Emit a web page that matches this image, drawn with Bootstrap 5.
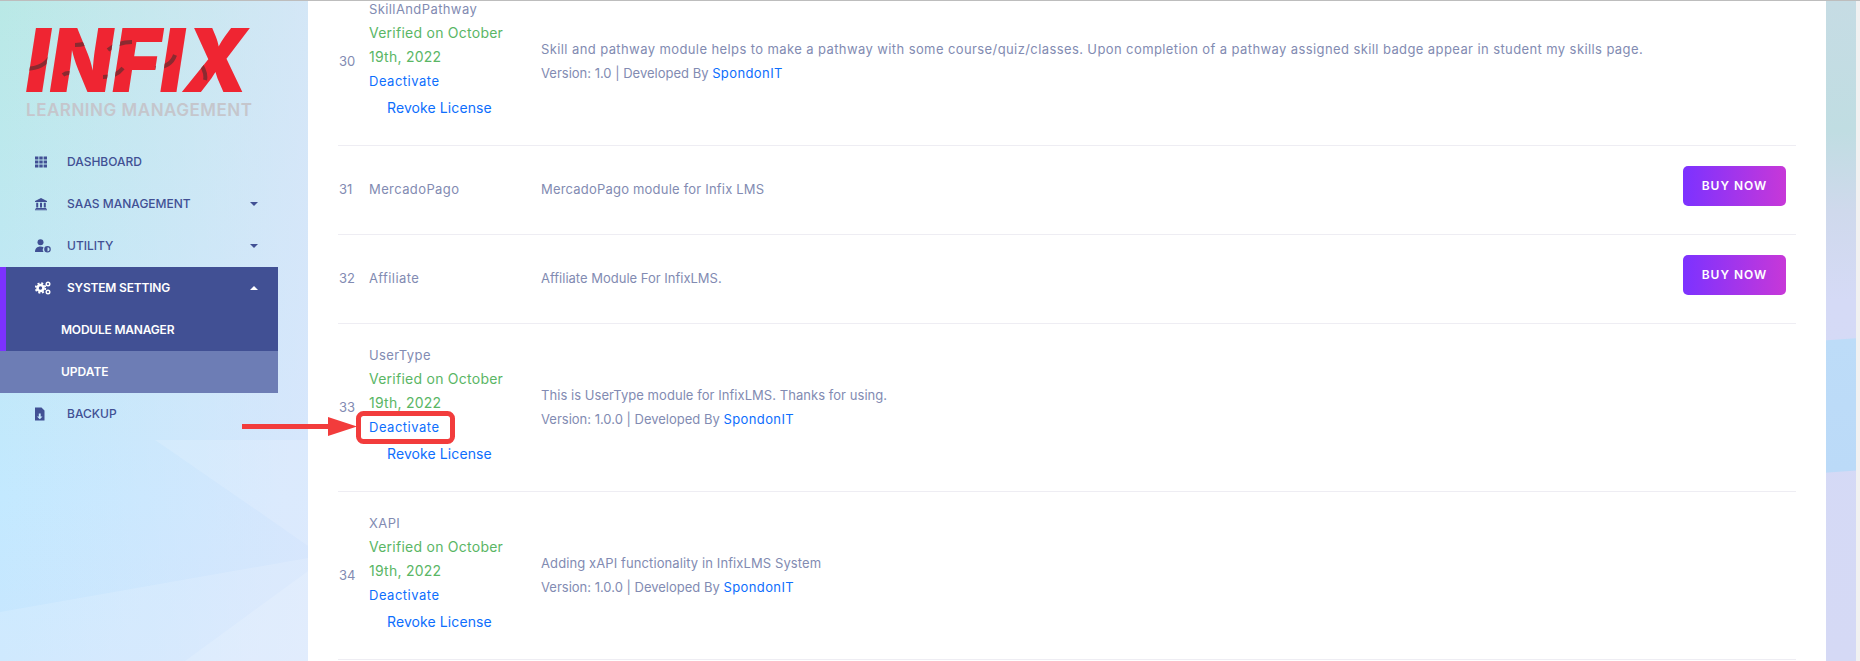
<!DOCTYPE html>
<html lang="en">
<head>
  <meta charset="UTF-8" />
  <meta name="viewport" content="width=device-width, initial-scale=1" />
  <title>Module Manager - Infix LMS</title>
  <link href="https://cdn.jsdelivr.net/npm/bootstrap@5.3.2/dist/css/bootstrap.min.css" rel="stylesheet" />
  <script src="https://cdn.jsdelivr.net/npm/bootstrap@5.3.2/dist/js/bootstrap.bundle.min.js"></script>
  <style>
    html, body { height: 100%; overflow: hidden; }
    body {
      font-family: Inter, "Liberation Sans", sans-serif;
      font-size: 13px;
      color: #828bb2;
      border-top: 1px solid #bdbdbd;
      background: #f1f1f1;
    }
    .page-wrap { height: 660px; width: 1856px; position: relative; overflow: hidden; }
    .side-menu {
      width: 308px;
      flex: none;
      background-image: url("data:image/svg+xml,%3Csvg xmlns='http://www.w3.org/2000/svg' width='308' height='660'%3E%3Cpolygon points='155,439 268,517 308,545 308,439' fill='%23fff' fill-opacity='.14'/%3E%3Cpolygon points='0,611 268,564 308,557 308,660 0,660' fill='%23fff' fill-opacity='.14'/%3E%3Cpolygon points='185,660 308,570 308,660' fill='%23fff' fill-opacity='.14'/%3E%3C/svg%3E"),
        linear-gradient(90deg, rgba(221,230,252,0) 0, rgba(221,230,252,.75) 100%),
        linear-gradient(180deg, #b9e9e6 0, #bfe8f3 40%, #c3e9ff 75%, #c8e6fe 100%);
    }
    .logo-box { height: 140px; padding-left: 26px; }
    .logo-box svg { display: block; overflow: visible; }
    .menu-item {
      height: 42px;
      padding-left: 35px;
      padding-right: 20px;
      width: 278px;
      font-size: 12px;
      font-weight: 500;
      color: #415094;
      text-transform: uppercase;
      text-decoration: none;
    }
    .menu-item svg { width: 16px; height: 14px; margin-right: 16px; flex: none; fill: #415094; }
    .menu-item .ms-auto { width: 0; height: 0; border-left: 4px solid transparent; border-right: 4px solid transparent; border-top: 4px solid #415094; }
    .menu-open { width: 278px; background: #415094; border-left: 6px solid #7c32ff; }
    .menu-open .menu-item { width: 100%; color: #fff; font-weight: 600; letter-spacing: -.2px; }
    .menu-open svg { fill: #fff; }
    .menu-item.head-open { padding-left: 29px; }
    .menu-item.head-open .ms-auto { border-top: 0; border-bottom: 4px solid #fff; }
    .menu-item.sub-open { padding-left: 55px; }
    .menu-item.sub-upd { padding-left: 61px; color: #fff; font-weight: 600; background: #6d7db5; }
    .main-pane { width: 1518px; flex: none; background: #fff; padding: 0 30px; overflow: hidden; }
    .edge-strip {
      width: 30px;
      flex: none;
      background:
        linear-gradient(176deg, transparent 0, transparent 338px, #bddcf8 339px, #bbdaf8 470px, transparent 471px),
        linear-gradient(180deg, #c6dce4 0, #c0dde2 130px, #cfd9ec 210px, #d5daf6 300px, #d5d9f5 100%);
    }
    .mod-table { margin: -23px 0 0; table-layout: fixed; width: 1458px; color: #828bb2; }
    .mod-table td {
      padding: 19px 10px 21px 0;
      vertical-align: middle;
      border-bottom: 1px solid #eeedf3;
      line-height: 24px;
      letter-spacing: .4px;
      color: #828bb2;
      background: transparent;
      box-shadow: none;
    }
    .mod-table td:first-child { padding-left: 1px; letter-spacing: 0; }
    .col-no { width: 31px; }
    .col-name { width: 172px; }
    .col-act { width: 130px; }
    .verified { color: #5ab665; font-size: 14px; letter-spacing: .25px; display: block; }
    .mod-link { color: #0d6efd; text-decoration: none; letter-spacing: .4px; }
    .deact { display: block; line-height: 22px; letter-spacing: .5px; margin-top: 1px; }
    .revoke { display: block; font-size: 14px; padding: 4px 0 4px 18px; letter-spacing: .1px; }
    .mod-ver { letter-spacing: 0; }
    .buy-btn {
      display: inline-block;
      width: 103px;
      height: 40px;
      line-height: 40px;
      margin: 1px 0 7px;
      border-radius: 5px;
      border: 0;
      padding: 0;
      text-align: center;
      font-size: 12px;
      font-weight: 600;
      letter-spacing: 1px;
      color: #fff;
      background: linear-gradient(90deg, #7c32ff 0, #c738d8 100%);
    }
    .callout { position: absolute; left: 242px; top: 409px; }
  </style>
</head>
<body>
  <div class="page-wrap d-flex">
    <aside class="side-menu">
      <div class="logo-box">
        <svg width="232" height="125" viewBox="0 0 232 125" role="img" aria-label="Infix Learning Management">
          <defs><clipPath id="logoClip"><text x="0" y="91" font-family="Inter" font-weight="900" font-style="italic" font-size="88" textLength="222" lengthAdjust="spacingAndGlyphs">INFIX</text></clipPath></defs>
          <text x="0" y="91" fill="#ef2532" font-family="Inter" font-weight="900" font-style="italic" font-size="88" textLength="222" lengthAdjust="spacingAndGlyphs">INFIX</text>
          <g clip-path="url(#logoClip)" fill="none" stroke="#8b2a30" stroke-width="4">
            <path d="M0 68Q18 67 24 56M49 44Q60 44 67 39M37 74Q42 70 49 74M82 49Q92 41 106 41M77 76Q90 76 97 67M129 67Q145 66 149 54M172 59Q181 71 179 79"/>
          </g>
          <text x="0" y="115" fill="#c5c6cc" font-family="Inter" font-weight="600" font-size="17" textLength="226" lengthAdjust="spacing">LEARNING MANAGEMENT</text>
        </svg>
      </div>
      <a class="menu-item d-flex align-items-center" href="#">
        <svg viewBox="0 0 16 14"><path d="M0 1.500h3.400v3H0zM4.300 1.500h3.400v3H4.300zM8.600 1.500H12v3H8.600zM0 5.500h3.400v3H0zM4.300 5.500h3.400v3H4.300zM8.600 5.500H12v3H8.600zM0 9.500h3.400v3H0zM4.300 9.500h3.400v3H4.300zM8.600 9.500H12v3H8.600z"/></svg>Dashboard</a>
      <a class="menu-item d-flex align-items-center" href="#">
        <svg viewBox="0 0 16 14"><path d="M6 1l6 3v1H0V4zM1.200 5.800h2v4.700h-2zM5 5.800h2v4.700H5zM8.800 5.800h2v4.700h-2zM.7 11h10.600v.9H.7zM0 12.300h12v1H0z"/></svg>SaaS Management<span class="ms-auto"></span></a>
      <a class="menu-item d-flex align-items-center" href="#">
        <svg viewBox="0 0 16 14"><circle cx="5.500" cy="3.300" r="3"/><path d="M0 13c0-3.300 2-5.500 5.500-5.500 1.300 0 2.300.3 3 .7a4.500 4.500 0 0 0 0 4.800z"/><path fill-rule="evenodd" d="M12.500 7a3.300 3.300 0 1 0 0 6.600 3.300 3.300 0 0 0 0-6.600zm0 1.200a2.100 2.100 0 0 1 0 4.200z"/></svg>Utility<span class="ms-auto"></span></a>
      <div class="menu-open">
        <a class="menu-item head-open d-flex align-items-center" href="#">
          <svg viewBox="0 0 16 14"><circle cx="5.500" cy="7" r="3" fill="none" stroke="#fff" stroke-width="2.600"/><circle cx="5.500" cy="7" r="4.800" fill="none" stroke="#fff" stroke-width="1.800" stroke-dasharray="2 1.800"/><circle cx="13" cy="3" r="1.800" fill="none" stroke="#fff" stroke-width="1.400"/><circle cx="13" cy="11" r="1.800" fill="none" stroke="#fff" stroke-width="1.400"/></svg>System Setting<span class="ms-auto"></span></a>
        <a class="menu-item sub-open d-flex align-items-center" href="#">Module Manager</a>
      </div>
      <a class="menu-item sub-upd d-flex align-items-center" href="#">Update</a>
      <a class="menu-item d-flex align-items-center" href="#">
        <svg viewBox="0 0 16 14"><path fill-rule="evenodd" d="M0 .5h6.500L9.500 3.500V13.500H0zM3.800 6.500v3H2l2.800 2.800L7.500 9.500H5.700v-3z"/></svg>Backup</a>
    </aside>
    <main class="main-pane">
      <table class="table mod-table mb-0">
        <colgroup><col class="col-no" /><col class="col-name" /><col /><col class="col-act" /></colgroup>
        <tbody id="modRows"></tbody>
      </table>
    </main>
    <div class="edge-strip"></div>
    <svg class="callout" width="220" height="40" viewBox="0 0 220 40" aria-hidden="true">
      <path d="M0 14H86V7L115 16.500 86 26V19H0z" fill="#f23c3c"/>
      <rect x="116.500" y="3.500" width="94" height="28" rx="5" fill="none" stroke="#f23c3c" stroke-width="5"/>
    </svg>
  </div>

  <script>
    // module rows, same order as the manager page
    // sp = letter spacing of the description, Inter runs narrower than the original font on some lines
    const modules = [
      { no: 30, name: 'SkillAndPathway', active: true, ver: '1.0', sp: .4, desc: 'Skill and pathway module helps to make a pathway with some course/quiz/classes. Upon completion of a pathway assigned skill badge appear in student my skills page.' },
      { no: 31, name: 'MercadoPago', sp: .2, desc: 'MercadoPago module for Infix LMS' },
      { no: 32, name: 'Affiliate', sp: 0, desc: 'Affiliate Module For InfixLMS.' },
      { no: 33, name: 'UserType', active: true, ver: '1.0.0', sp: .05, desc: 'This is UserType module for InfixLMS. Thanks for using.' },
      { no: 34, name: 'XAPI', active: true, ver: '1.0.0', sp: .1, desc: 'Adding xAPI functionality in InfixLMS System' }
    ];

    document.getElementById('modRows').innerHTML = modules.map(m => `
      <tr>
        <td>${m.no}</td>
        <td>
          <div>${m.name}</div>
          ${m.active ? `<span class="verified">Verified on October 19th, 2022</span>
          <a class="mod-link deact" href="#">Deactivate</a>
          <a class="mod-link revoke" href="#">Revoke License</a>` : ''}
        </td>
        <td>
          <div style="letter-spacing:${m.sp}px">${m.desc}</div>
          ${m.ver ? `<div class="mod-ver">Version: ${m.ver} | Developed By <a class="mod-link" href="#">SpondonIT</a></div>` : ''}
        </td>
        <td class="text-end">${m.active ? '' : '<button class="buy-btn" type="button">BUY NOW</button>'}</td>
      </tr>`).join('');
  </script>
</body>
</html>
